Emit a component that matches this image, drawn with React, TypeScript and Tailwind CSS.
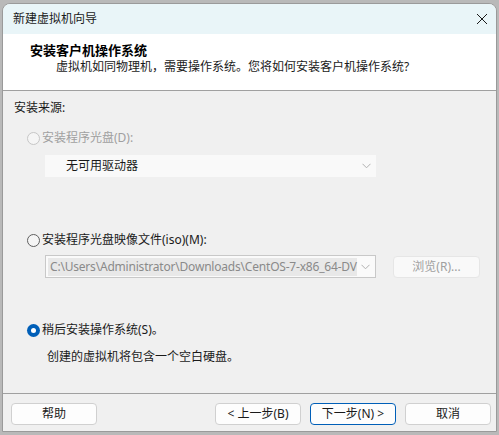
import React from "react";

const font = { fontFamily: '"Noto Sans", "Noto Sans CJK SC", sans-serif' };

function Chevron({ color = "#a0a0a0" }: { color?: string }) {
  return (
    <svg width="9" height="6" viewBox="0 0 9 6" className="shrink-0">
      <path d="M0.5 0.8 L4.5 4.8 L8.5 0.8" fill="none" stroke={color} strokeWidth="1" />
    </svg>
  );
}

function Radio({ state }: { state: "disabled" | "off" | "on" }) {
  if (state === "on") {
    return (
      <span className="w-[13px] h-[13px] rounded-full bg-[#005fb8] flex items-center justify-center shrink-0">
        <span className="w-[5px] h-[5px] rounded-full bg-white" />
      </span>
    );
  }
  return (
    <span
      className={`w-[13px] h-[13px] rounded-full border shrink-0 ${
        state === "disabled" ? "border-[#c6c6c6] bg-[#f5f5f5]" : "border-[#5f5f5f] bg-[#f5f5f5]"
      }`}
    />
  );
}

function Btn({ label, focused }: { label: string; focused?: boolean }) {
  return (
    <button
      className={`w-[86px] h-[22px] rounded-[4px] bg-[#fdfdfd] text-[12px] text-[#1a1a1a] flex items-center justify-center border ${
        focused ? "border-[#005fb8]" : "border-[#d0d0d0]"
      }`}
    >
      {label}
    </button>
  );
}

export default function App() {
  return (
    <div className="w-[499px] h-[435px] bg-[#b9b9b9] pt-[3px] px-[2px] overflow-hidden" style={font}>
      <div className="h-[429px] rounded-t-[8px] border border-[#9a9a9a] bg-[#f0f0f0] flex flex-col overflow-hidden">
        {/* title bar */}
        <div className="h-[30px] bg-[#e9f5f8] flex items-center justify-between pl-[10px] pr-[7px] shrink-0">
          <span className="text-[12px] text-[#1a1a1a]">新建虚拟机向导</span>
          <svg width="14" height="14" viewBox="0 0 14 14">
            <path d="M2 2 L12 12 M12 2 L2 12" stroke="#1a1a1a" strokeWidth="1" />
          </svg>
        </div>

        {/* header */}
        <div className="h-[57px] bg-white border-b border-[#a0a0a0] pt-[7px] shrink-0">
          <div className="pl-[27px] text-[13px] font-bold text-black leading-[18px]">安装客户机操作系统</div>
          <div className="pl-[53px] text-[12px] text-[#1a1a1a] leading-[16px]">
            虚拟机如同物理机，需要操作系统。您将如何安装客户机操作系统?
          </div>
        </div>

        {/* body */}
        <div className="flex-1 flex flex-col pl-[11px] pt-[9px] text-[12px] text-[#1a1a1a]">
          <div className="leading-[16px]">安装来源:</div>

          <div className="flex items-center gap-[2px] mt-[14px] pl-[13px] h-[16px] text-[#a0a0a0]">
            <Radio state="disabled" />
            <span>安装程序光盘(D):</span>
          </div>
          <div className="ml-[31px] mt-[9px] w-[331px] h-[22px] bg-[#f9f9f9] flex items-center justify-between pl-[21px] pr-[5px]">
            <span className="text-[#1a1a1a]">无可用驱动器</span>
            <Chevron color="#b0b0b0" />
          </div>

          <div className="flex items-center gap-[2px] mt-[55px] pl-[13px] h-[16px]">
            <Radio state="off" />
            <span>安装程序光盘映像文件(iso)(M):</span>
          </div>
          <div className="flex items-center mt-[7px] ml-[31px]">
            <div className="w-[331px] h-[23px] bg-[#fafafa] border border-[#c8c8c8] flex items-center justify-between pl-[2px] pr-[5px]">
              <span className="bg-[#e8e8e8] text-[#8a8a8a] pl-[2px] whitespace-nowrap tracking-[-0.2px] leading-[18px]">
                C:\Users\Administrator\Downloads\CentOS-7-x86_64-DV
              </span>
              <Chevron color="#b0b0b0" />
            </div>
            <div className="ml-[17px] w-[87px] h-[22px] rounded-[4px] bg-[#f9f9f9] border border-[#e6e6e6] text-[#a0a0a0] flex items-center justify-center">
              浏览(R)...
            </div>
          </div>

          <div className="flex items-center gap-[2px] mt-[44px] pl-[13px] h-[16px]">
            <Radio state="on" />
            <span>稍后安装操作系统(S)。</span>
          </div>
          <div className="mt-[11px] pl-[33px] leading-[16px]">创建的虚拟机将包含一个空白硬盘。</div>
        </div>

        {/* footer */}
        <div className="h-[38px] border-t border-[#a0a0a0] flex items-start pt-[9px] pl-[8px] pr-[5px] shrink-0">
          <Btn label="帮助" />
          <div className="ml-auto flex gap-[9px]">
            <Btn label="< 上一步(B)" />
            <Btn label="下一步(N) >" focused />
            <Btn label="取消" />
          </div>
        </div>
      </div>
    </div>
  );
}
